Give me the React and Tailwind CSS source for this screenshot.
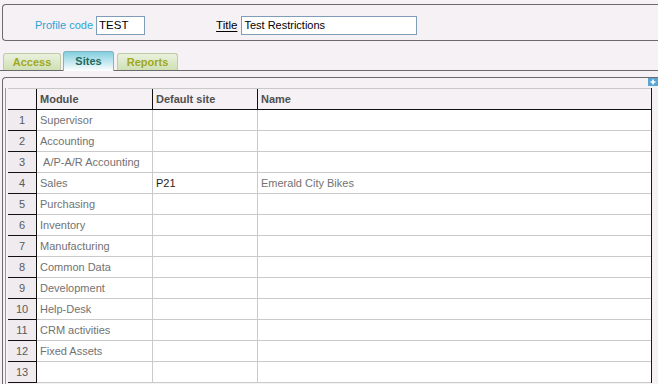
const rows = [
  { n: 1, module: "Supervisor", site: "", name: "" },
  { n: 2, module: "Accounting", site: "", name: "" },
  { n: 3, module: "\u00a0A/P-A/R Accounting", site: "", name: "" },
  { n: 4, module: "Sales", site: "P21", name: "Emerald City Bikes" },
  { n: 5, module: "Purchasing", site: "", name: "" },
  { n: 6, module: "Inventory", site: "", name: "" },
  { n: 7, module: "Manufacturing", site: "", name: "" },
  { n: 8, module: "Common Data", site: "", name: "" },
  { n: 9, module: "Development", site: "", name: "" },
  { n: 10, module: "Help-Desk", site: "", name: "" },
  { n: 11, module: "CRM activities", site: "", name: "" },
  { n: 12, module: "Fixed Assets", site: "", name: "" },
  { n: 13, module: "", site: "", name: "" },
];

function Tab({ label, active }) {
  if (active) {
    return (
      <div className="h-[20px] w-[51px] mb-[-1px] rounded-t-[3px] border border-b-0 border-[#7fb3bf] bg-gradient-to-b from-[#82cfe0] via-[#bfe6ee] to-[#ffffff] flex items-center justify-center text-[11px] font-bold text-[#1d6b5c]">
        {label}
      </div>
    );
  }
  return (
    <div className="h-[17px] rounded-t-[3px] border border-b-0 border-[#bccca6] bg-gradient-to-b from-[#eaf1de] to-[#cfe0b4] flex items-center justify-center text-[11px] font-bold text-[#a0a81e] px-[10px]">
      {label}
    </div>
  );
}

export default function App() {
  return (
    <div className="w-[658px] h-[384px] overflow-hidden bg-[#f5f1f4] font-['Liberation_Sans',Arial,sans-serif]">
      {/* header panel */}
      <div className="pt-[4px] pl-[2px]">
        <div className="h-[37px] border border-r-0 border-[#6b6b6b] rounded-l-[4px] flex items-start pt-[11px]">
          <span className="ml-[32px] h-[19px] leading-[19px] text-[11px] text-[#2ea3d6]">Profile code</span>
          <div className="ml-[3px] w-[49px] h-[19px] border border-[#7f9db9] bg-white flex items-center pl-[2px] text-[11.5px] text-black">
            TEST
          </div>
          <span className="ml-[71px] h-[19px] leading-[19px] text-[11.5px] text-black underline underline-offset-2">Title</span>
          <div className="ml-[4px] w-[176px] h-[19px] border border-[#7f9db9] bg-white flex items-center pl-[2px] text-[11px] text-black">
            Test Restrictions
          </div>
        </div>
      </div>

      {/* tabs */}
      <div className="mt-[11px] h-[19px] border-b border-[#6b6b6b] flex items-end pl-[3px] gap-[2px]">
        <div className="w-[58px] flex flex-col">
          <Tab label="Access" />
        </div>
        <Tab label="Sites" active />
        <div className="ml-[1px] w-[61px] flex flex-col">
          <Tab label="Reports" />
        </div>
      </div>

      {/* grid panel */}
      <div className="mt-[6px] ml-[2px] border-t border-l border-[#6b6b6b] rounded-tl-[4px] h-[320px]">
        <div className="h-[10px] flex justify-end">
          <div className="w-[10px] h-[8px] bg-[#5aa6d2] flex items-center justify-center">
            <svg width="8" height="8" viewBox="0 0 8 8">
              <path d="M4 1.5v5M1.5 4h5" stroke="#fff" strokeWidth="1.6" />
            </svg>
          </div>
        </div>
        <div className="ml-[2px] border-l border-[#9a9a9a] h-full pl-[2px]">
          <div className="w-[644px] border-r border-[#1a1a1a] bg-white">
            {/* header row */}
            <div className="flex h-[22px] bg-[#f5f1f4] border-t border-[#c8c8c8] border-b border-b-[#111]">
              <div className="w-[29px] border-r border-[#111]" />
              <div className="w-[116px] border-r border-[#111] flex items-center pl-[3px] text-[11px] font-bold text-[#505050]">Module</div>
              <div className="w-[105px] border-r border-[#111] flex items-center pl-[3px] text-[11px] font-bold text-[#505050]">Default site</div>
              <div className="flex-1 flex items-center pl-[3px] text-[11px] font-bold text-[#505050]">Name</div>
            </div>
            {rows.map((r) => (
              <div key={r.n} className="flex h-[21px]">
                <div className="w-[29px] bg-[#efebee] border-r border-b border-[#111] flex items-center justify-center text-[11px] text-[#5a5a5a]">
                  {r.n}
                </div>
                <div className="w-[116px] border-r border-b border-[#cacaca] flex items-center pl-[3px] text-[11px] text-[#727272] whitespace-pre">
                  {r.module}
                </div>
                <div className="w-[105px] border-r border-b border-[#cacaca] flex items-center pl-[3px] text-[11px] text-[#1e1e1e]">
                  {r.site}
                </div>
                <div className="flex-1 border-b border-[#cacaca] flex items-center pl-[3px] text-[11px] text-[#727272]">
                  {r.name}
                </div>
              </div>
            ))}
          </div>
        </div>
      </div>
    </div>
  );
}
